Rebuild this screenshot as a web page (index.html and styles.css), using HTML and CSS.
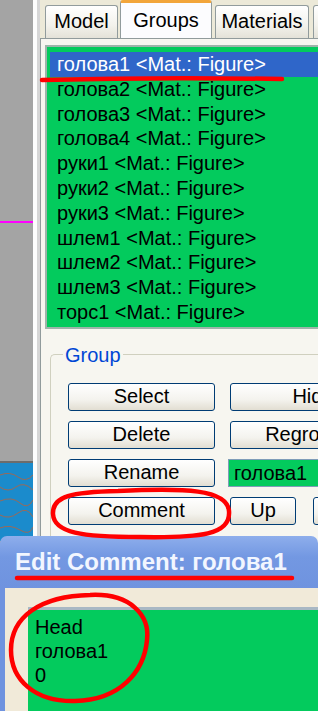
FILE: index.html
```html
<!DOCTYPE html>
<html lang="ru">
<head>
  <meta charset="UTF-8">
  <meta name="viewport" content="width=device-width, initial-scale=1.0">
  <link rel="stylesheet" href="styles.css">
  <title>Groups</title>
</head>
<body>
  <div class="screen">
    <div class="side">
      <div class="side-mark"></div>
      <div class="side-scene">
        <svg width="33" height="80" viewBox="0 0 33 80">
          <path d="M0 12 Q10 8 18 14 T33 12" class="wire"/>
          <path d="M0 24 Q8 30 16 24 T33 27" class="wire"/>
          <path d="M0 38 Q12 33 20 40 T33 37" class="wire"/>
          <path d="M0 52 Q9 57 18 50 T33 54" class="wire"/>
          <path d="M0 65 Q10 61 20 67 T33 64" class="wire"/>
        </svg>
      </div>
    </div>
    <div class="sep"></div>

    <div class="panel">
      <div class="tabs">
        <div class="tab tab-model">Model</div>
        <div class="tab tab-groups active">Groups</div>
        <div class="tab tab-materials">Materials</div>
        <div class="tab tab-more"></div>
      </div>

      <div class="tab-page">
        <ul class="list">
          <li class="selected">голова1 &lt;Mat.: Figure&gt;</li>
          <li>голова2 &lt;Mat.: Figure&gt;</li>
          <li>голова3 &lt;Mat.: Figure&gt;</li>
          <li>голова4 &lt;Mat.: Figure&gt;</li>
          <li>руки1 &lt;Mat.: Figure&gt;</li>
          <li>руки2 &lt;Mat.: Figure&gt;</li>
          <li>руки3 &lt;Mat.: Figure&gt;</li>
          <li>шлем1 &lt;Mat.: Figure&gt;</li>
          <li>шлем2 &lt;Mat.: Figure&gt;</li>
          <li>шлем3 &lt;Mat.: Figure&gt;</li>
          <li>торс1 &lt;Mat.: Figure&gt;</li>
        </ul>

        <fieldset class="group">
          <legend>Group</legend>
          <div class="buttons">
            <button class="btn">Select</button>
            <button class="btn btn-hide">Hide</button>
            <button class="btn">Delete</button>
            <button class="btn btn-wide">Regroup</button>
            <button class="btn">Rename</button>
            <div class="name-field">голова1</div>
            <button class="btn">Comment</button>
            <div class="btn-row">
              <button class="btn btn-up">Up</button>
              <button class="btn btn-down">Down</button>
            </div>
          </div>
        </fieldset>
      </div>
    </div>

    <div class="dialog">
      <div class="dialog-title">Edit Comment: голова1</div>
      <div class="dialog-body">
        <div class="comment">Head<br>голова1<br>0</div>
      </div>
    </div>

    <svg class="marks" width="318" height="711" viewBox="0 0 318 711">
      <path d="M42 80 Q160 77 282 79"/>
      <path d="M118 491 C185 488 227 489 229 511 C231 535 200 538 140 537 C82 537 54 533 53 514 C52 496 72 492 118 491 Z"/>
      <path d="M17 578 L292 578"/>
      <path d="M90 595 C130 593 150 615 147 640 C144 672 120 700 75 701 C35 702 11 680 11 650 C11 617 40 596 90 595 Z"/>
    </svg>
  </div>
</body>
</html>
```

FILE: styles.css
```css
* {
  box-sizing: border-box;
}

body {
  margin: 0;
  font-family: "Liberation Sans", Arial, sans-serif;
  font-size: 20px;
}

.screen {
  position: relative;
  display: flex;
  width: 318px;
  height: 711px;
  overflow: hidden;
  background-color: #ece9d8;
}

/* viewport strip on the left */
.side {
  flex-shrink: 0;
  display: flex;
  flex-direction: column;
  width: 33px;
  background-color: #a4a4a4;
}

.side-mark {
  margin-top: 221px;
  height: 2px;
  background-color: #ff00ff;
}

.side-scene {
  margin-top: 238px;
  height: 80px;
  border-top: 2px solid #6c6c6c;
  background-color: #1b8bcc;
}

.side-scene svg {
  display: block;
}

.wire {
  fill: none;
  stroke: #9a6a58;
  stroke-width: 1;
}

.sep {
  flex-shrink: 0;
  width: 7px;
  background: linear-gradient(90deg, #fdfdfd 0 4px, #d6d6d6 4px);
}

/* tab control */
.panel {
  flex: 1;
  min-width: 0;
  display: flex;
  flex-direction: column;
}

.tabs {
  display: flex;
  align-items: flex-end;
  height: 38px;
  padding-left: 5px;
}

.tab {
  flex-shrink: 0;
  height: 33px;
  border: 1px solid #919b9c;
  border-bottom: none;
  border-radius: 3px 3px 0 0;
  background: linear-gradient(#ffffff, #f3f2ec 60%, #e4e2d8);
  line-height: 31px;
  text-align: center;
  color: #000;
}

.tab-model {
  width: 73px;
}

.tab-groups {
  width: 92px;
  margin-left: 2px;
}

.tab-materials {
  width: 94px;
  margin-left: 3px;
}

.tab-more {
  width: 40px;
  margin-left: 4px;
}

.tab.active {
  height: 38px;
  border-top: 3px solid #f2a53a;
  background: #fcfcfe;
  line-height: 34px;
}

.tab-page {
  flex: 1;
  border-top: 1px solid #919b9c;
  border-left: 1px solid #919b9c;
  background-color: #f7f6f0;
}

/* group list */
.list {
  margin: 6px 0 0 4px;
  padding: 5px 0 2px 3px;
  list-style: none;
  border: 2px solid #9eb4aa;
  border-right: none;
  background-color: #03cb5d;
}

.list li {
  height: 24.8px;
  padding-left: 7px;
  line-height: 24.8px;
  white-space: nowrap;
  color: #000;
}

.list li.selected {
  background-color: #2f66c9;
  color: #fff;
}

/* group box */
.group {
  min-width: 0;
  margin: 15px 0 0 9px;
  padding: 17px 0 40px 12px;
  border: 1px solid #d0d0bf;
  border-right: none;
  border-radius: 5px 0 0 5px;
}

.group legend {
  padding: 0 2px;
  line-height: 22px;
  color: #0046d5;
}

.buttons {
  display: grid;
  grid-template-columns: 147px 180px;
  grid-auto-rows: 28px;
  column-gap: 15px;
  row-gap: 10px;
  padding-left: 5px;
}

.btn {
  height: 28px;
  padding: 0;
  border: 1px solid #003c74;
  border-radius: 3px;
  background: linear-gradient(#ffffff, #f4f3ee 60%, #e2ded2);
  font-family: inherit;
  font-size: 20px;
  color: #000;
  text-align: center;
}

.btn-hide {
  width: 166px;
}

.btn-wide {
  width: 147px;
}

.name-field {
  margin-left: -2px;
  padding-left: 5px;
  border: 1px solid #7f9db9;
  background-color: #03cb5d;
  line-height: 26px;
  color: #000;
}

.btn-row {
  display: flex;
  gap: 17px;
}

.btn-up {
  flex-shrink: 0;
  width: 66px;
}

.btn-down {
  flex-shrink: 0;
  width: 70px;
}

/* comment dialog */
.dialog {
  position: absolute;
  left: 0;
  top: 536px;
  width: 318px;
  height: 175px;
  display: flex;
  flex-direction: column;
}

.dialog-title {
  display: flex;
  align-items: center;
  height: 52px;
  padding-left: 15px;
  border-radius: 7px 7px 0 0;
  background: linear-gradient(#8eaeec, #7398e2 40%, #6f93df);
  font-size: 24px;
  font-weight: bold;
  color: #f2f6ff;
  white-space: nowrap;
}

.dialog-body {
  flex: 1;
  display: flex;
  padding: 19px 0 0 23px;
  border-left: 5px solid #6f93df;
  background-color: #f1ead9;
}

.comment {
  flex: 1;
  padding: 5px 7px;
  border-top: 3px solid #a9b8c4;
  background-color: #03cb5d;
  line-height: 24px;
  color: #000;
}

/* red hand-drawn marks */
.marks {
  position: absolute;
  left: 0;
  top: 0;
  pointer-events: none;
}

.marks path {
  fill: none;
  stroke: #ff0000;
  stroke-width: 4.5;
  stroke-linecap: round;
}
```
